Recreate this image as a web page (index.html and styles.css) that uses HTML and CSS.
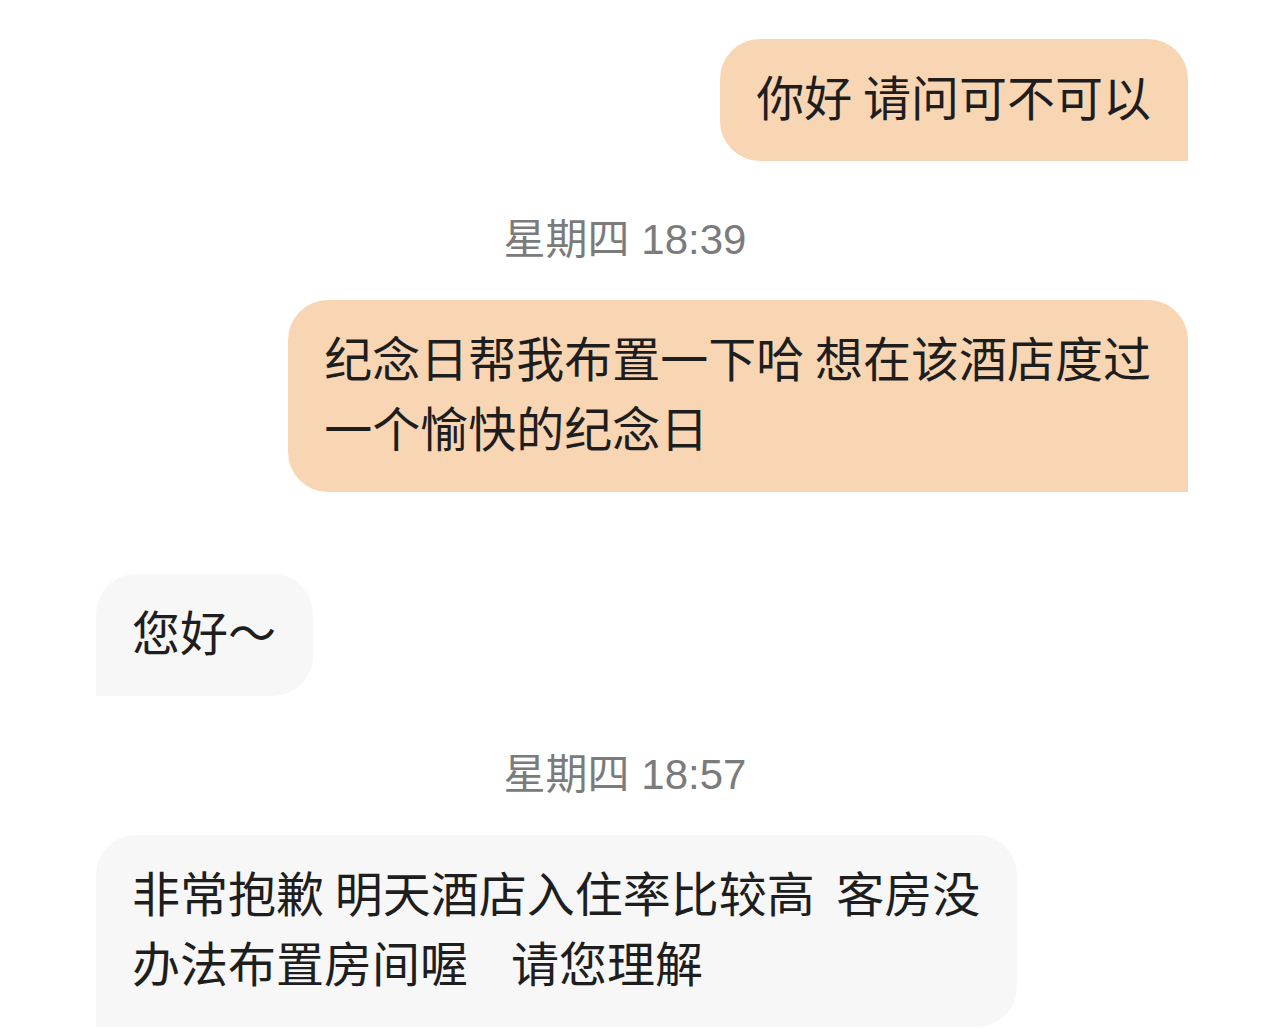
FILE: index.html
```html
<!DOCTYPE html>
<html lang="zh-CN">
<head>
    <meta charset="UTF-8">
    <title>聊天记录</title>
    <link rel="stylesheet" href="styles.css">
</head>
<body>
<div class="chat">
    <!--我发的-->
    <div class="msg mine first">你好 请问可不可以</div>

    <div class="time">星期四 18:39</div>
    <div class="msg mine">纪念日帮我布置一下哈 想在该酒店度过<br>一个愉快的纪念日</div>

    <!--酒店回复-->
    <div class="msg other gap">您好～</div>

    <div class="time">星期四 18:57</div>
    <div class="msg other">非常抱歉 明天酒店入住率比较高&nbsp; 客房没<br>办法布置房间喔&nbsp;&nbsp;&nbsp; 请您理解</div>
</div>
</body>
</html>
```

FILE: styles.css
```css
* {
    margin: 0;
    padding: 0;
}

body {
    background-color: #ffffff;
    font-family: "Noto Sans CJK SC", "Noto Sans", sans-serif;
    color: #1e1e1e;
}

.chat {
    display: flex;
    flex-direction: column;
    padding: 39px 96px 0;
}

.msg {
    font-size: 48px;
    line-height: 70px;
    padding: 21px 37px 31px 36px;
    border-radius: 40px;
    white-space: nowrap;
}

.mine {
    align-self: flex-end;
    background-color: #f8d5b3;
    border-bottom-right-radius: 0;
}

.other {
    align-self: flex-start;
    background-color: #f7f7f7;
    border-bottom-left-radius: 0;
}

.gap {
    margin-top: 82px;
}

.time {
    font-family: "Liberation Sans", "Noto Sans CJK SC", sans-serif;
    font-size: 42px;
    line-height: 56px;
    color: #7b7b7b;
    text-align: center;
    padding-right: 34px;
    margin: 51px 0 32px;
}
```
